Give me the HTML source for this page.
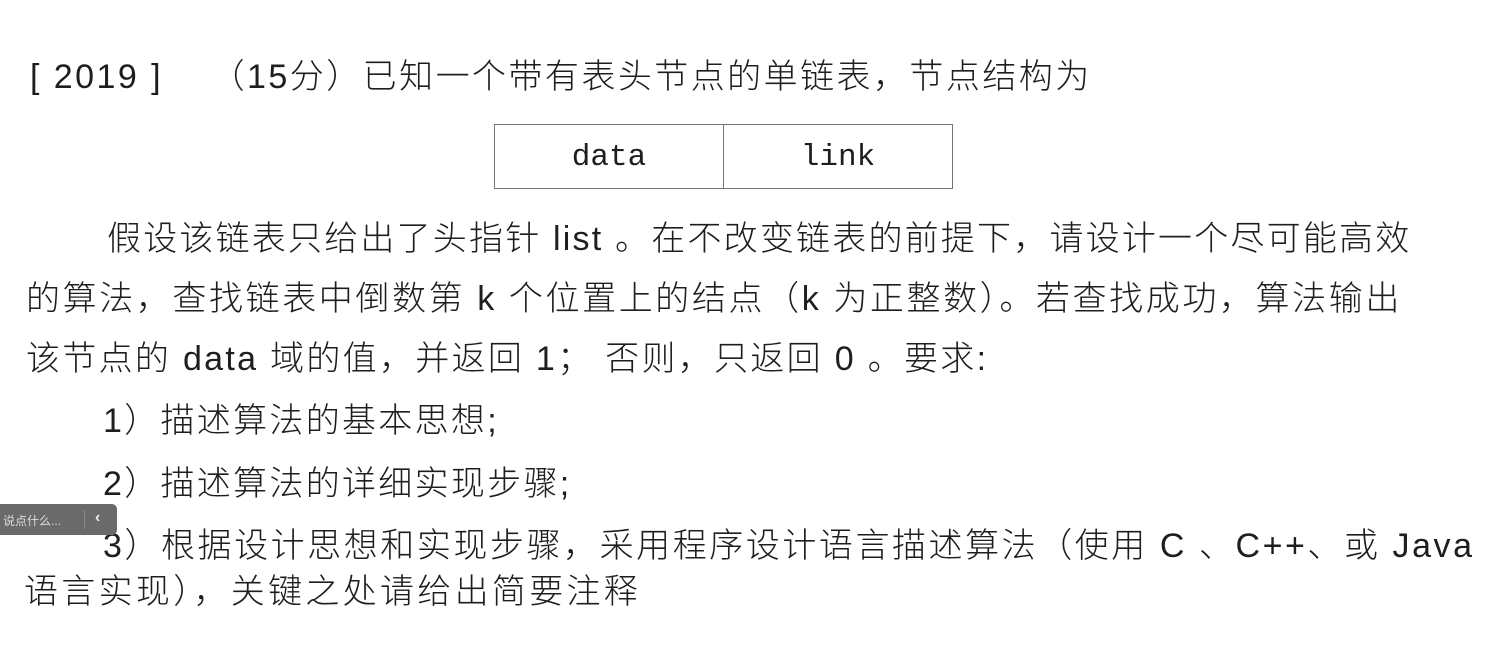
<!DOCTYPE html>
<html><head><meta charset="utf-8"><style>
body{margin:0;width:1486px;height:652px;background:#fff;overflow:hidden;position:relative;font-family:"Liberation Sans","Noto Sans CJK SC",sans-serif;color:#1e1e1e}
.l{position:absolute;font-size:34px;line-height:48px;white-space:nowrap;letter-spacing:2.3px;font-weight:300}
.box{position:absolute;left:494px;top:124px;width:459px;height:65px;border:1px solid #777;box-sizing:border-box;display:flex}
.box div{flex:1;display:flex;align-items:center;justify-content:center;font-family:"Liberation Mono",monospace;font-size:31px;padding-top:2px}
.box div:first-child{border-right:1px solid #777}
.chat{position:absolute;left:0;top:504px;width:117px;height:31px;background:#6a6a6a;border-radius:0 5px 5px 0;color:#ddd;font-size:12px;font-family:"Liberation Sans","Noto Sans CJK SC",sans-serif}
</style></head><body>
<div class="l" style="left:30px;top:53px;letter-spacing:2.45px">[ 2019 ]&nbsp;&nbsp;&nbsp;&nbsp;（15分）已知一个带有表头节点的单链表，节点结构为</div>
<div class="box"><div>data</div><div>link</div></div>
<div class="l" style="left:107px;top:215px;letter-spacing:2.2px">假设该链表只给出了头指针 list 。在不改变链表的前提下，请设计一个尽可能高效</div>
<div class="l" style="left:26px;top:275px;letter-spacing:2.6px">的算法，查找链表中倒数第 k 个位置上的结点（k 为正整数）。若查找成功，算法输出</div>
<div class="l" style="left:26px;top:335px">该节点的 data 域的值，并返回 1； 否则，只返回 0 。要求:</div>
<div class="l" style="left:103px;top:397px">1）描述算法的基本思想;</div>
<div class="l" style="left:103px;top:460px">2）描述算法的详细实现步骤;</div>
<div class="l" style="left:103px;top:522px;letter-spacing:2.55px">3）根据设计思想和实现步骤，采用程序设计语言描述算法（使用 C 、C++、或 Java</div>
<div class="l" style="left:24px;top:568px;letter-spacing:3.3px">语言实现），关键之处请给出简要注释</div>
<div class="chat"><span style="position:absolute;left:3px;top:8px">说点什么...</span><span style="position:absolute;left:84px;top:6px;width:1px;height:19px;background:#888"></span><span style="position:absolute;left:95px;top:5px;font-size:16px;color:#eee;font-weight:bold">‹</span></div>
</body></html>
